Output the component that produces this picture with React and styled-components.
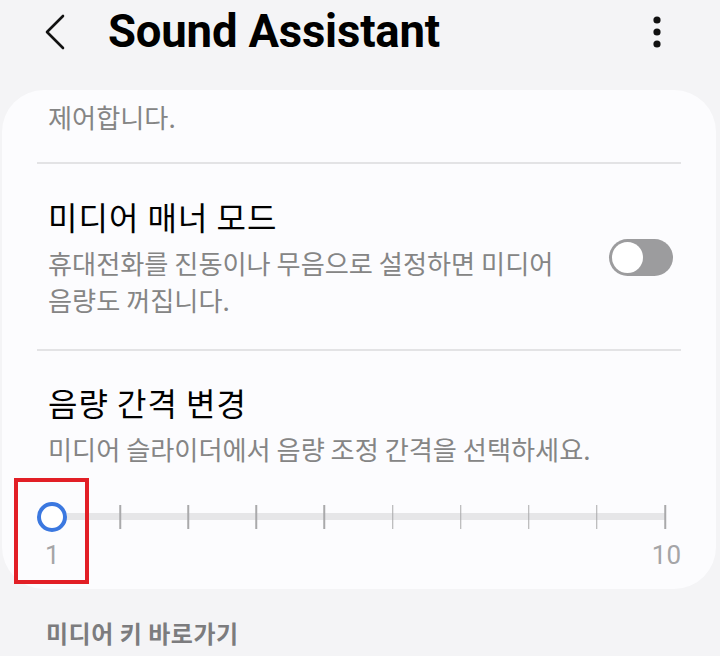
import React from 'react';
import styled, { createGlobalStyle } from 'styled-components';

const GlobalStyle = createGlobalStyle`
	html, body {
		margin: 0;
		padding: 0;
		background: #f4f4f6;
	}
	body {
		width: 720px;
		height: 656px;
		overflow: hidden;
		font-family: "Noto Sans CJK KR", "Noto Sans", sans-serif;
		word-break: keep-all;
	}
`

const Page = styled.div`
	position: relative;
	width: 720px;
	height: 656px;
	display: flex;
	flex-direction: column;

	& > * {
		flex-shrink: 0;
	}
`

const Header = styled.div`
	height: 90px;
	display: flex;
	align-items: flex-start;
	padding: 10px 44px 0 44px;
	box-sizing: border-box;
	gap: 36px;
`

const BackButton = styled.div`
	width: 28px;
	height: 44px;
	display: flex;
	align-items: center;
`

const Title = styled.h1`
	flex: 1;
	margin: 0;
	font-family: Roboto, "Liberation Sans", sans-serif;
	font-weight: 700;
	font-size: 45.5px;
	line-height: 44px;
	color: #000;
	letter-spacing: -0.2px;
`

const MoreButton = styled.div`
	width: 30px;
	height: 44px;
	display: flex;
	align-items: center;
	justify-content: center;
	margin-right: 4px;
`

const Card = styled.div`
	margin: 0 4px 0 2px;
	background: #fcfcfe;
	border-radius: 42px;
	padding: 0 35px;
`

const Section = styled.div`
	padding: ${p => p.$pad || '32px 0 30px'};
	border-bottom: ${p => (p.$last ? 'none' : '2px solid #e3e3e5')};
	display: flex;
	align-items: center;
	gap: 20px;
`

const TextBlock = styled.div`
	flex: 1;
	padding-left: 11px;
	display: flex;
	flex-direction: column;
	gap: 9px;
`

const ItemTitle = styled.div`
	font-size: 32px;
	line-height: 40px;
	color: #000;
	letter-spacing: 1px;
`

const ItemDesc = styled.div`
	font-size: 26.2px;
	line-height: 37px;
	color: #858585;
`

const Toggle = styled.div`
	width: 64px;
	height: 37px;
	border-radius: 19px;
	background: #9c9c9e;
	position: relative;
	margin-right: 8px;
	flex-shrink: 0;

	&::after {
		content: '';
		position: absolute;
		left: 3px;
		top: 3px;
		width: 31px;
		height: 31px;
		border-radius: 50%;
		background: #fff;
	}
`

const SliderBlock = styled.div`
	padding: 29px 0 0 0;
`

const SliderTrack = styled.div`
	position: relative;
	height: 40px;
	margin: 0 16px 0 15px;
`

const TrackLine = styled.div`
	position: absolute;
	left: 0;
	right: 0;
	top: 16px;
	height: 7px;
	background: #e6e6e8;
`

const Tick = styled.div`
	position: absolute;
	top: 8px;
	width: 1.5px;
	height: 24px;
	background: #a9a9ab;
	transform: translateX(-50%);
`

const Thumb = styled.div`
	position: absolute;
	left: 0;
	top: 5px;
	width: 22px;
	height: 22px;
	border: 4px solid #3b78e0;
	border-radius: 50%;
	background: #fff;
	transform: translateX(-50%);
`

const SliderLabels = styled.div`
	display: flex;
	justify-content: space-between;
	padding: 1px 0 17px 8px;
	font-family: Roboto, "Noto Sans", sans-serif;
	font-size: 26px;
	line-height: 34px;
	color: #a5a5a7;
`

const SubHeader = styled.div`
	padding: 26px 0 0 46px;
	font-size: 24px;
	font-weight: 700;
	color: #7c7c7e;
	letter-spacing: 0.5px;
`

const Highlight = styled.div`
	position: absolute;
	left: 14px;
	top: 478px;
	width: 67px;
	height: 98px;
	border: 4px solid #e21f26;
`

export default function App() {
	const ticks = Array.from({ length: 9 }, (_, i) => (i + 1) / 9);

	return (
		<Page>
			<GlobalStyle />
			<Header>
				<BackButton>
					<svg width="22" height="36" viewBox="0 0 22 36">
						<path d="M19 2 L3 18 L19 34" fill="none" stroke="#111" strokeWidth="2.6" strokeLinecap="round" strokeLinejoin="round" />
					</svg>
				</BackButton>
				<Title>Sound Assistant</Title>
				<MoreButton>
					<svg width="10" height="34" viewBox="0 0 10 34">
						<circle cx="5" cy="5" r="3.6" fill="#111" />
						<circle cx="5" cy="17" r="3.6" fill="#111" />
						<circle cx="5" cy="29" r="3.6" fill="#111" />
					</svg>
				</MoreButton>
			</Header>

			<Card>
				<Section $pad="9px 0 26px">
					<TextBlock>
						<ItemDesc>제어합니다.</ItemDesc>
					</TextBlock>
				</Section>

				<Section>
					<TextBlock>
						<ItemTitle>미디어 매너 모드</ItemTitle>
						<ItemDesc>휴대전화를 진동이나 무음으로 설정하면 미디어 음량도 꺼집니다.</ItemDesc>
					</TextBlock>
					<Toggle />
				</Section>

				<Section $pad="31px 0 0" $last>
					<TextBlock>
						<ItemTitle>음량 간격 변경</ItemTitle>
						<ItemDesc>미디어 슬라이더에서 음량 조정 간격을 선택하세요.</ItemDesc>
					</TextBlock>
				</Section>

				<SliderBlock>
					<SliderTrack>
						<TrackLine />
						{ticks.map((t) => (
							<Tick key={t} style={{ left: `${t * 100}%` }} />
						))}
						<Thumb />
					</SliderTrack>
					<SliderLabels>
						<span>1</span>
						<span>10</span>
					</SliderLabels>
				</SliderBlock>
			</Card>

			<SubHeader>미디어 키 바로가기</SubHeader>

			<Highlight />
		</Page>
	);
}
